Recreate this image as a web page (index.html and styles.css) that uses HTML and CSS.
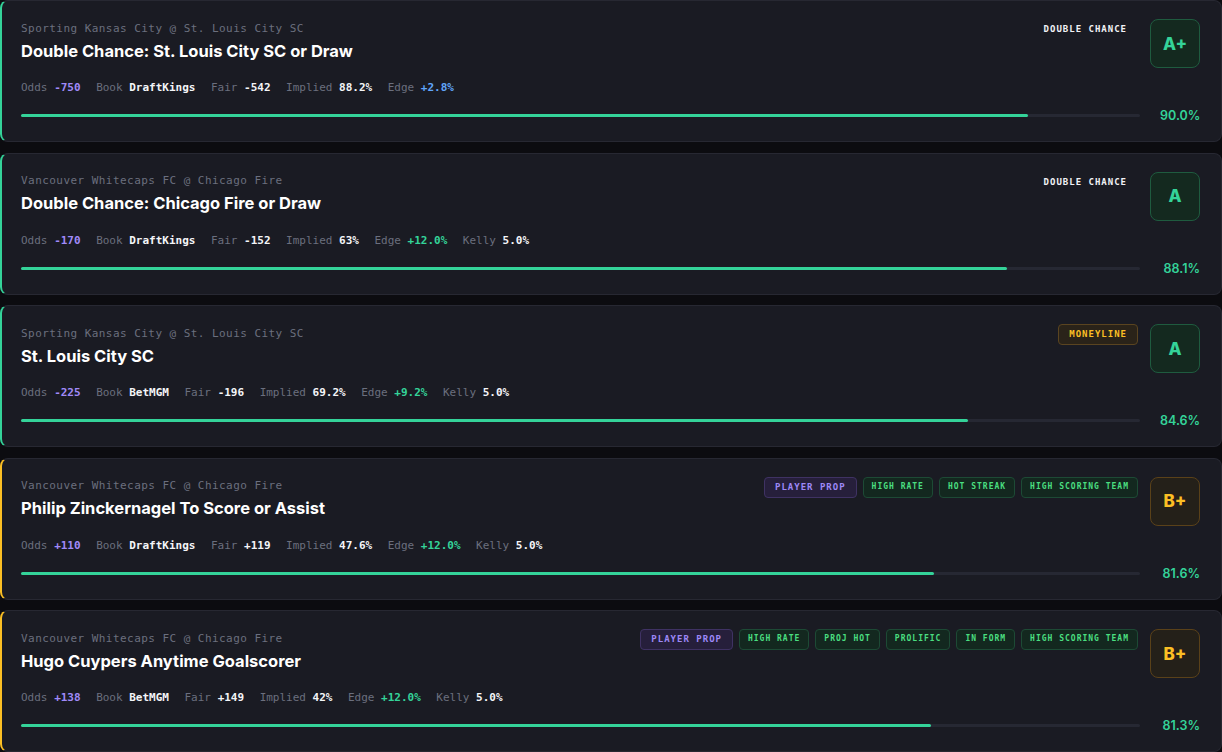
FILE: index.html
```html
<!DOCTYPE html>
<html lang="en">
<head>
    <meta charset="UTF-8">
    <meta name="viewport" content="width=device-width, initial-scale=1.0">
    <title>Top Picks</title>
    <link rel="stylesheet" href="styles.css">
</head>
<body>
    <div class="picks">

        <div class="pick grade-a">
            <div class="pick-top">
                <div class="pick-info">
                    <div class="matchup">Sporting Kansas City @ St. Louis City SC</div>
                    <div class="selection">Double Chance: St. Louis City SC or Draw</div>
                </div>
                <div class="pick-side">
                    <div class="tags">
                        <span class="tag tag-plain">Double Chance</span>
                    </div>
                    <div class="grade">A+</div>
                </div>
            </div>
            <div class="stats">
                <span class="stat">Odds <b class="odds">-750</b></span>
                <span class="stat">Book <b>DraftKings</b></span>
                <span class="stat">Fair <b>-542</b></span>
                <span class="stat">Implied <b>88.2%</b></span>
                <span class="stat">Edge <b class="edge-low">+2.8%</b></span>
            </div>
            <div class="confidence">
                <div class="bar"><div class="bar-fill" style="width: 90.0%"></div></div>
                <span class="pct">90.0%</span>
            </div>
        </div>

        <div class="pick grade-a">
            <div class="pick-top">
                <div class="pick-info">
                    <div class="matchup">Vancouver Whitecaps FC @ Chicago Fire</div>
                    <div class="selection">Double Chance: Chicago Fire or Draw</div>
                </div>
                <div class="pick-side">
                    <div class="tags">
                        <span class="tag tag-plain">Double Chance</span>
                    </div>
                    <div class="grade">A</div>
                </div>
            </div>
            <div class="stats">
                <span class="stat">Odds <b class="odds">-170</b></span>
                <span class="stat">Book <b>DraftKings</b></span>
                <span class="stat">Fair <b>-152</b></span>
                <span class="stat">Implied <b>63%</b></span>
                <span class="stat">Edge <b class="edge">+12.0%</b></span>
                <span class="stat">Kelly <b>5.0%</b></span>
            </div>
            <div class="confidence">
                <div class="bar"><div class="bar-fill" style="width: 88.1%"></div></div>
                <span class="pct">88.1%</span>
            </div>
        </div>

        <div class="pick grade-a">
            <div class="pick-top">
                <div class="pick-info">
                    <div class="matchup">Sporting Kansas City @ St. Louis City SC</div>
                    <div class="selection">St. Louis City SC</div>
                </div>
                <div class="pick-side">
                    <div class="tags">
                        <span class="tag tag-amber">Moneyline</span>
                    </div>
                    <div class="grade">A</div>
                </div>
            </div>
            <div class="stats">
                <span class="stat">Odds <b class="odds">-225</b></span>
                <span class="stat">Book <b>BetMGM</b></span>
                <span class="stat">Fair <b>-196</b></span>
                <span class="stat">Implied <b>69.2%</b></span>
                <span class="stat">Edge <b class="edge">+9.2%</b></span>
                <span class="stat">Kelly <b>5.0%</b></span>
            </div>
            <div class="confidence">
                <div class="bar"><div class="bar-fill" style="width: 84.6%"></div></div>
                <span class="pct">84.6%</span>
            </div>
        </div>

        <div class="pick grade-b">
            <div class="pick-top">
                <div class="pick-info">
                    <div class="matchup">Vancouver Whitecaps FC @ Chicago Fire</div>
                    <div class="selection">Philip Zinckernagel To Score or Assist</div>
                </div>
                <div class="pick-side">
                    <div class="tags">
                        <span class="tag tag-purple">Player Prop</span>
                        <span class="flag">High Rate</span>
                        <span class="flag">Hot Streak</span>
                        <span class="flag">High Scoring Team</span>
                    </div>
                    <div class="grade">B+</div>
                </div>
            </div>
            <div class="stats">
                <span class="stat">Odds <b class="odds">+110</b></span>
                <span class="stat">Book <b>DraftKings</b></span>
                <span class="stat">Fair <b>+119</b></span>
                <span class="stat">Implied <b>47.6%</b></span>
                <span class="stat">Edge <b class="edge">+12.0%</b></span>
                <span class="stat">Kelly <b>5.0%</b></span>
            </div>
            <div class="confidence">
                <div class="bar"><div class="bar-fill" style="width: 81.6%"></div></div>
                <span class="pct">81.6%</span>
            </div>
        </div>

        <div class="pick grade-b">
            <div class="pick-top">
                <div class="pick-info">
                    <div class="matchup">Vancouver Whitecaps FC @ Chicago Fire</div>
                    <div class="selection">Hugo Cuypers Anytime Goalscorer</div>
                </div>
                <div class="pick-side">
                    <div class="tags">
                        <span class="tag tag-purple">Player Prop</span>
                        <span class="flag">High Rate</span>
                        <span class="flag">Proj Hot</span>
                        <span class="flag">Prolific</span>
                        <span class="flag">In Form</span>
                        <span class="flag">High Scoring Team</span>
                    </div>
                    <div class="grade">B+</div>
                </div>
            </div>
            <div class="stats">
                <span class="stat">Odds <b class="odds">+138</b></span>
                <span class="stat">Book <b>BetMGM</b></span>
                <span class="stat">Fair <b>+149</b></span>
                <span class="stat">Implied <b>42%</b></span>
                <span class="stat">Edge <b class="edge">+12.0%</b></span>
                <span class="stat">Kelly <b>5.0%</b></span>
            </div>
            <div class="confidence">
                <div class="bar"><div class="bar-fill" style="width: 81.3%"></div></div>
                <span class="pct">81.3%</span>
            </div>
        </div>

    </div>
</body>
</html>
```

FILE: styles.css
```css
* {
    box-sizing: border-box;
}
body {
    margin: 0;
    background-color: #0c0c10;
    font-family: 'Inter', 'Noto Sans', sans-serif;
    color: #f1f2f5;
}
.picks {
    display: flex;
    flex-direction: column;
    gap: 10.5px;
}
.pick {
    background-color: #1a1b23;
    border: 1px solid #272832;
    border-left: 2px solid #34d399;
    border-radius: 8px;
    padding: 18px 21px 17.5px 19px;
}
.pick.grade-b {
    border-left-color: #fbbf24;
}
.pick-top {
    display: flex;
    justify-content: space-between;
    align-items: flex-start;
}
.matchup {
    margin-top: 2.5px;
    font-family: 'DejaVu Sans Mono', monospace;
    font-size: 11px;
    line-height: 14px;
    letter-spacing: 0.45px;
    color: #6b6f7e;
}
.selection {
    margin-top: 5px;
    font-size: 16.5px;
    line-height: 20px;
    font-weight: 700;
    color: #ffffff;
}
.pick-side {
    display: flex;
    align-items: flex-start;
    gap: 12px;
}
.tags {
    display: flex;
    gap: 6px;
}
.tag, .flag {
    font-family: 'DejaVu Sans Mono', monospace;
    font-weight: 700;
    text-transform: uppercase;
    letter-spacing: 1px;
    border: 1px solid transparent;
    border-radius: 4px;
}
.tag {
    font-size: 9px;
    line-height: 19px;
    padding: 0 10px;
}
.tag-plain {
    color: #f1f2f5;
}
.tag-amber {
    color: #fbbf24;
    background-color: #2a2319;
    border-color: #5a4420;
}
.tag-purple {
    color: #9d88f7;
    background-color: #261f3b;
    border-color: #3f3263;
}
.flag {
    font-size: 8px;
    line-height: 17.5px;
    padding: 0 8px;
    color: #4ade80;
    background-color: #13281f;
    border-color: #1d4a35;
}
.grade {
    width: 50px;
    height: 49px;
    display: flex;
    align-items: center;
    justify-content: center;
    border: 1px solid #1f5b3f;
    border-radius: 8px;
    background-color: #14291f;
    color: #34d399;
    font-size: 17px;
    font-weight: 800;
}
.grade-b .grade {
    border-color: #5a4119;
    background-color: #242019;
    color: #fbbf24;
}
.stats {
    display: flex;
    gap: 15.5px;
    margin-top: 12px;
    font-family: 'DejaVu Sans Mono', monospace;
    font-size: 11px;
    line-height: 16px;
    color: #6b6f7e;
    white-space: pre;
}
.stats b {
    color: #f4f5f8;
    font-weight: 700;
}
.stats .odds {
    color: #a08af8;
}
.stats .edge {
    color: #34d399;
}
.stats .edge-low {
    color: #60a5fa;
}
.confidence {
    display: flex;
    align-items: center;
    gap: 20px;
    margin-top: 11.5px;
    height: 16px;
}
.bar {
    flex: 1;
    height: 3px;
    border-radius: 2px;
    background-color: #262833;
}
.bar-fill {
    height: 100%;
    border-radius: 2px;
    background-color: #34d399;
}
.pct {
    width: 40px;
    text-align: right;
    font-size: 12.5px;
    font-weight: 600;
    color: #34d399;
}
```
